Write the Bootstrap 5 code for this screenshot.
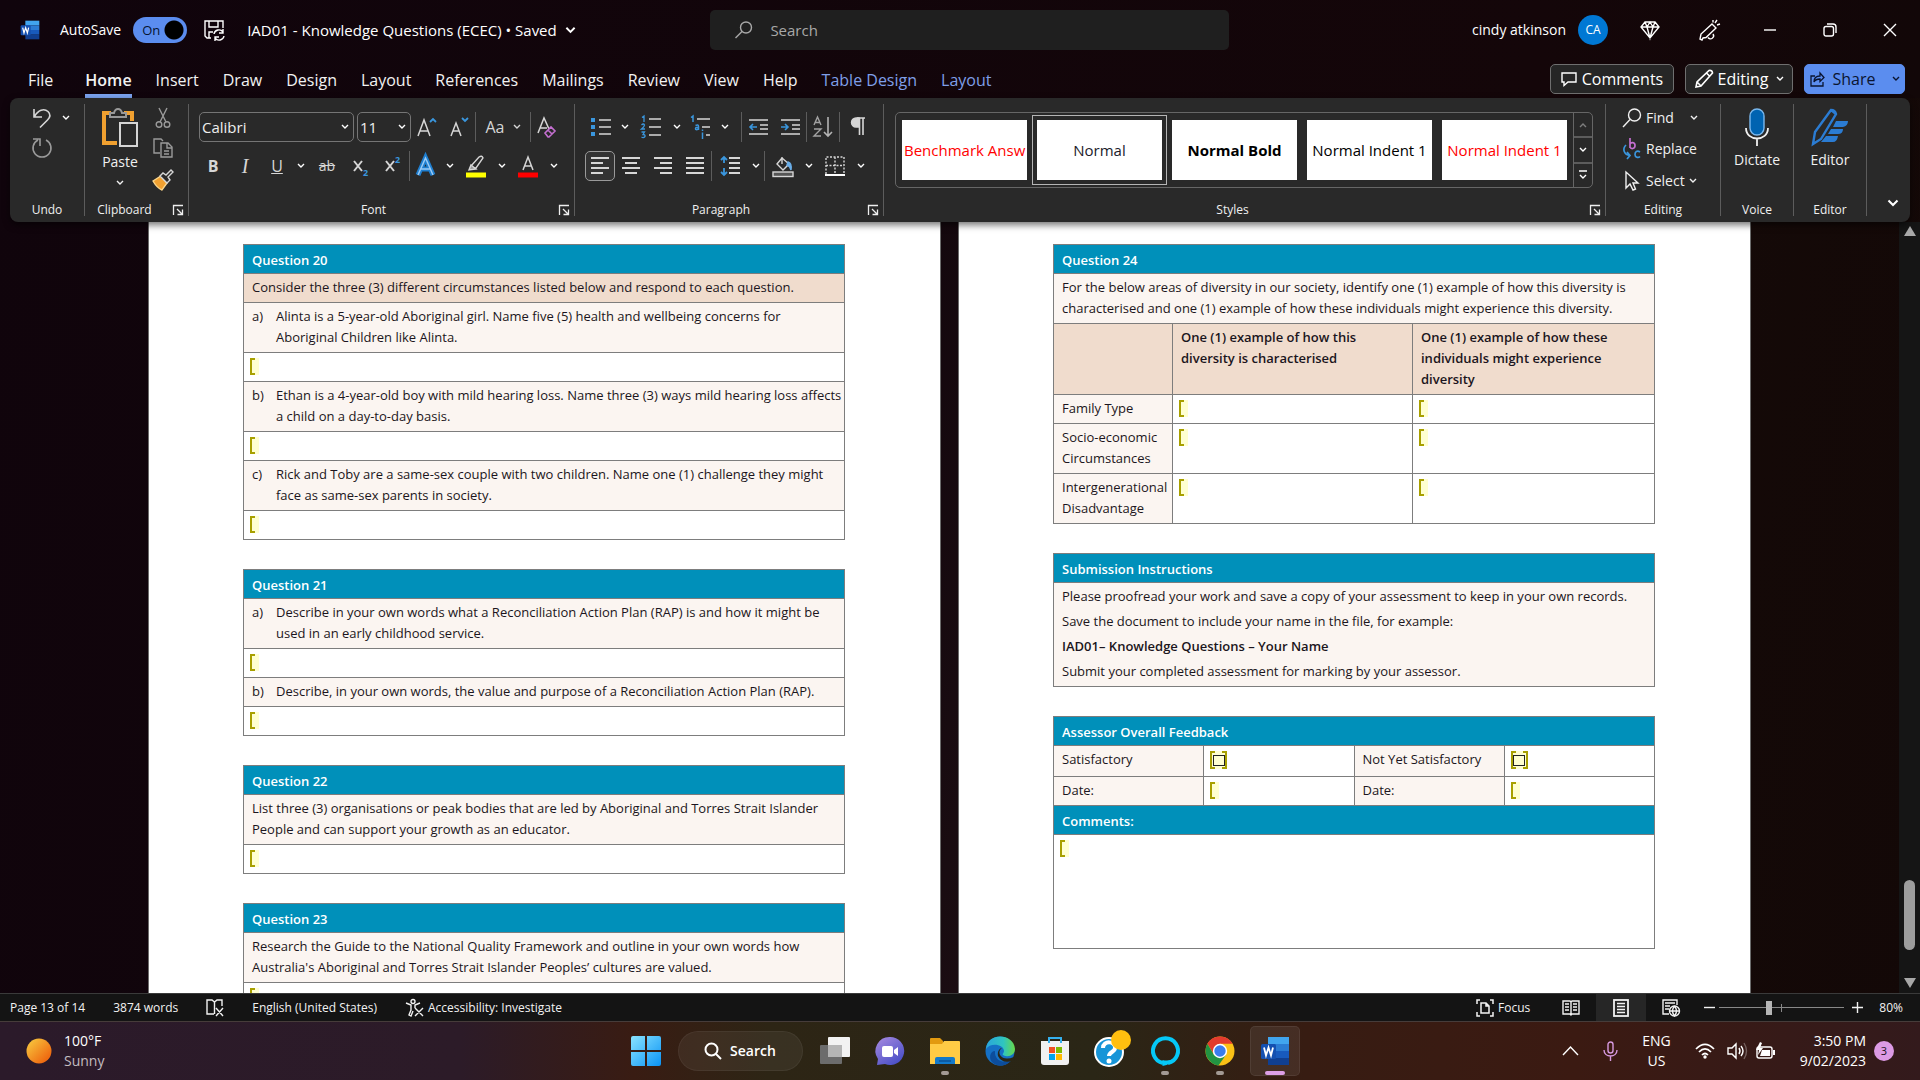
<!DOCTYPE html>
<html lang="en">
<head>
<meta charset="utf-8">
<meta name="viewport" content="width=device-width, initial-scale=1">
<title>IAD01 - Knowledge Questions (ECEC)</title>
<link href="https://cdn.jsdelivr.net/npm/bootstrap@5.3.0/dist/css/bootstrap.min.css" rel="stylesheet">
<style>
  :root { --ui: "Open Sans", "Noto Sans", sans-serif; --doc: "Open Sans", "Noto Sans", sans-serif; }
  body { font-family: var(--ui); font-size: 14px; line-height: 20px; color: #fff; background: linear-gradient(100deg, #10040c 0%, #12060c 45%, #231418 62%, #150a08 75%, #130807 100%); }
  button { font-family: inherit; }
  svg { display: block; flex: none; fill: none; stroke: currentColor; stroke-width: 1.4; overflow: visible; }
  svg text { stroke: none; fill: currentColor; font-family: var(--ui); }
  .flat { border: 0; background: none; color: inherit; padding: 0; display: flex; align-items: center; justify-content: center; }

  /* title bar */
  .titlebar { display: grid; grid-template-columns: 37% 27% 36%; height: 60px; align-items: center; background: linear-gradient(90deg, #10040c, #140609 80%, #120708); }
  .switch-wrap { position: relative; width: 54px; height: 26px; }
  .switch-wrap input { appearance: none; width: 54px; height: 26px; border-radius: 13px; background: radial-gradient(circle at 41px 13px, #000 9px, transparent 10px), #5b8def; margin: 0; display: block; }
  .switch-wrap span { position: absolute; left: 9px; top: 3px; font-size: 13px; color: #061430; pointer-events: none; }
  .doc-name { font-size: 15px; margin-left: 22px; }
  .search-box { height: 40px; background: #1f1f1f; border-radius: 5px; color: #a8a8a8; }
  .search-box input { background: none; border: 0; outline: 0; color: inherit; font-size: 15px; padding: 0; }
  .search-box input::placeholder { color: #a8a8a8; opacity: 1; }
  .avatar { width: 30px; height: 30px; border-radius: 50%; background: #0078d4; font-size: 12px; margin-right: 12px; }
  .win { width: 60px; height: 40px; }

  /* tabs */
  .tabs { height: 38px; background: linear-gradient(90deg, #10040c, #140609 80%, #120708); }
  .tabs .nav-link { font-size: 16px; line-height: 24px; color: #f2f2f2; padding: 0 0 4px; border-bottom: 4px solid transparent; border-radius: 0; }
  .tabs .nav-link.active { font-weight: 600; border-color: #7ba3f0; }
  .tabs .nav-link.ctx { color: #7f9fe8; }
  .tab-actions { gap: 11px; padding: 4px 15px 0 0; }
  .pill { height: 30px; width: 108px; border: 1px solid #6f6f6f; border-radius: 5px; background: #262626; color: #fff; font-size: 16px; display: flex; align-items: center; justify-content: center; padding: 0; }
  .pill.notes { width: 124px; }
  .pill.share { width: 101px; background: #5b8def; border-color: #5b8def; color: #0a1430; }

  /* ribbon */
  .ribbon { height: 124px; margin: 0 10px; background: #292929; border-radius: 8px; position: relative; z-index: 2; box-shadow: 0 3px 7px rgba(0,0,0,.55); padding: 6px 0; color: #d6d6d6; }
  .grp { border-right: 1px solid #5c5c5c; display: flex; flex-direction: column; position: relative; }
  .grp-body { height: 100px; }
  .grp-name { height: 12px; font-size: 12px; line-height: 12px; text-align: center; color: #f0f0f0; }
  .launch { position: absolute; right: 4px; bottom: 0; width: 12px; height: 12px; color: #eee; }
  .w-undo { width: 75px; } .w-clip { width: 104px; } .w-font { width: 386px; } .w-para { width: 309px; }
  .w-edit { width: 115px; } .w-voice { width: 73px; } .w-end { width: 43px; }
  .cmd-row { display: flex; align-items: center; padding-top: 7px; height: 39px; }
  .cmd-row.fonts { padding-left: 2px; }
  .tool { width: 32px; height: 32px; }
  .tool.wide { width: 36px; }
  .tool.low { height: 28px; }
  .tool.dim { color: #9a9a9a; }
  .tool.on { width: 30px; height: 30px; border: 1px solid #9a9a9a; border-radius: 5px; background: #333; }
  .case-btn { width: 54px; height: 32px; }
  .chev { width: 16px; height: 28px; color: #fff; }
  .vsep { width: 1px; height: 30px; background: #5c5c5c; }
  .combo { appearance: none; height: 30px; font-size: 15px; line-height: 20px; color: #eee; border: 1px solid #757575; border-radius: 5px; padding: 0 14px 0 2px;
    background: #292929 url("data:image/svg+xml,%3Csvg xmlns='http://www.w3.org/2000/svg' viewBox='0 0 8 6'%3E%3Cpath d='M1 1l3 3 3-3' fill='none' stroke='white' stroke-width='1.4'/%3E%3C/svg%3E") no-repeat right 4px center / 8px 6px; }
  .combo.face { width: 155px; margin-right: 3px; } .combo.size { width: 54px; }
  .serif-i { font-family: "Liberation Serif", serif; }
  .edit-list { gap: 2px; }
  .small-cmd { height: 30px; font-size: 14px; color: #f0f0f0; justify-content: flex-start; }
  .small-cmd.first { height: 28px; }
  .big-cmd { flex-direction: column; justify-content: flex-start; font-size: 14px; color: #f0f0f0; }
  .gal-pad { padding: 8px 12px 0 11px; }
  .gallery { height: 76px; border: 1px solid #666; border-radius: 5px; }
  .tiles { gap: 10px; padding: 0 6px; }
  .style-tile { flex: 1 1 0; min-width: 0; height: 60px; background: #fff; border: 0; padding: 0 2px; color: #000; font-size: 15px; white-space: nowrap; overflow: hidden; }
  .style-tile.picked { outline: 1px solid #b5b5b5; outline-offset: 4px; color: #1b1b2b; }
  .style-tile.red { color: #f00; }
  .gal-nav { width: 19px; border-left: 1px solid #666; }
  .gal-nav button { flex: 1; }
  .gal-nav button + button { border-top: 2px solid #5c5c5c; }

  /* document canvas */
  .canvas-area { flex: 1 1 0; min-height: 0; overflow: hidden; }
  .sheet { flex: 0 1 793px; background: #fff; border: 0 solid #6c6c6c; border-width: 0 1px; padding: 22px 95px 0 94px; color: #1b1520; }
  .sheets { gap: 17px; overflow: hidden; }
  .qt { width: 100%; border-collapse: collapse; table-layout: fixed; font-family: var(--doc); font-size: 13px; line-height: 21px; margin-bottom: 29px; }
  .qt td, .qt th { border: 1px solid #7d7d7d; padding: 3px 2px 4px 8px; vertical-align: top; background: #fbf5f1; font-weight: 400; text-align: left; }
  .qt th.head { background: #0090ba; color: #fff; font-weight: 600; padding: 5px 8px 2px; }
  .qt .peach { background: #f0dccd; }
  .qt th.peach, .qt b { font-weight: 600; }
  .qt td.ans { background: #fff; padding: 5px 6px 2px; }
  .qt ol { margin: 0; padding: 0; list-style: none; }
  .qt li { padding-left: 24px; text-indent: -24px; }
  .qt li::before { content: attr(data-n); display: inline-block; width: 24px; text-indent: 0; }
  .qt p { margin: 0 0 4px; } .qt p:last-child { margin: 0; }
  .c-label { width: 119px; } .c-mid { width: 240px; }
  .fill { display: flex; height: 21px; }
  .fill::before { content: ""; flex: none; width: 9px; height: 17px; background: linear-gradient(#a8a000, #a8a000) 0 0 / 2px 17px no-repeat, linear-gradient(#a8a000, #a8a000) 0 0 / 5px 2px no-repeat, linear-gradient(#a8a000, #a8a000) 0 100% / 5px 2px no-repeat, #ffffd0; }
  .fill input, .fill textarea { flex: 1; min-width: 0; border: 0; padding: 0; background: none; outline: 0; resize: none; }
  .fill.tall { height: 106px; }
  .tickbox { display: flex; align-items: center; justify-content: center; width: 17px; height: 18px; background: linear-gradient(#a8a000, #a8a000) 0 0 / 2px 100% no-repeat, linear-gradient(#a8a000, #a8a000) 100% 0 / 2px 100% no-repeat, linear-gradient(90deg, #a8a000 5px, #ffffd0 5px 12px, #a8a000 12px) 0 0 / 100% 2px no-repeat, linear-gradient(90deg, #a8a000 5px, #ffffd0 5px 12px, #a8a000 12px) 0 100% / 100% 2px no-repeat, #ffffd0; }
  .tickbox input { appearance: none; width: 12px; height: 11px; border: 1px solid #222; margin: 0; }
  .qt td.ans.roomy { padding-bottom: 7px; }
  .scroller { width: 21px; background: #151515; color: #a8a8a8; padding: 4px 0 5px; }
  .scroller .thumb { width: 11px; border-radius: 6px; background: #9d9d9d; flex: 0 0 70px; }
  .scroller .above { flex: 642; } .scroller .below { flex: 28; }

  /* status bar */
  .statusbar { height: 28px; background: #141414; border-top: 1px solid #3a3a3a; font-size: 12px; color: #f2f2f2; padding: 0 17px 0 10px; }
  .status-info { gap: 28px; }
  .view-btn { width: 50px; height: 27px; }
  .view-btn.on { background: #262626; }
  .zoomer { appearance: none; width: 125px; height: 14px; margin: 0; background: linear-gradient(#888, #888) 62px 50% / 1px 8px no-repeat, linear-gradient(#888, #888) 0 50% / 100% 1px no-repeat; }
  .zoomer::-webkit-slider-thumb { appearance: none; width: 6px; height: 14px; background: #b5b5b5; }

  /* taskbar */
  .taskbar { display: grid; grid-template-columns: 1fr auto 1fr; align-items: center; height: 59px; border-top: 1px solid #463c3a; font-size: 14px; padding: 0 26px;
    background: linear-gradient(90deg, #2b1a2a 0%, #2c1b28 24%, #391c13 33%, #2d2515 40%, #2a2616 57%, #371c12 68%, #3b1a12 82%, #331a1c 100%); }
  .muted-sky { color: #c3bcc0; }
  .apps { gap: 5px; }
  .app { width: 50px; height: 50px; border-radius: 5px; position: relative; }
  .app.live::after { content: ""; position: absolute; bottom: 1px; left: 21px; width: 8px; height: 4px; border-radius: 2px; background: #a39a94; }
  .app.front { background: rgba(255,255,255,.08); box-shadow: inset 0 0 0 1px rgba(255,255,255,.07); }
  .app.front::after { left: 15px; width: 20px; background: #dd9fe6; }
  .start-search { width: 125px; height: 40px; margin: 0 2px; border-radius: 20px; background: rgba(255,255,255,.06); box-shadow: inset 0 0 0 1px rgba(255,255,255,.05); font-weight: 600; }
  .tally { width: 20px; height: 20px; border-radius: 50%; background: #dc9ae4; color: #1b1020; font-size: 11px; }
  .mic { color: #d79ae0; }
</style>
<script src="https://cdn.jsdelivr.net/npm/bootstrap@5.3.0/dist/js/bootstrap.bundle.min.js"></script>
</head>
<body class="vh-100 d-flex flex-column overflow-hidden">

<svg width="0" height="0" class="position-absolute" aria-hidden="true">
  <symbol id="chev" viewBox="0 0 8 6"><path d="M1 1l3 3 3-3"/></symbol>
  <symbol id="launch" viewBox="0 0 12 12"><path d="M1.500 11V1.500H11M5 5l5 5M10.500 5.500v5h-5" stroke-width="1.300"/></symbol>
  <symbol id="word" viewBox="0 0 30 30"><g stroke="none"><rect x="8" y="1" width="21" height="7" fill="#41a5ee"/><rect x="8" y="8" width="21" height="7" fill="#2b7cd3"/><rect x="8" y="15" width="21" height="7" fill="#185abd"/><rect x="8" y="22" width="21" height="7" fill="#103f91"/><rect x="1" y="8" width="15" height="15" rx="1.500" fill="#1450b0"/></g><path d="M4 11.500l2 8 2.500-8 2.500 8 2-8" stroke="#fff" stroke-width="1.800"/></symbol>
</svg>

<header class="titlebar">
  <div class="d-flex align-items-center ps-3">
    <svg class="ms-1" width="20" height="22"><use href="#word"/></svg>
    <label for="autosave" class="ms-3 ps-1 me-2 pe-1">AutoSave</label>
    <div class="switch-wrap"><input type="checkbox" role="switch" id="autosave" checked><span>On</span></div>
    <button class="flat ms-3" aria-label="Save"><svg width="22" height="22" viewBox="0 0 22 22"><path d="M8 19H4l-2-2V2h18v7M6 2v6h9V2M6 19v-6h4"/><path d="M11 15a5 5 0 0 1 9-2M20 10v4h-4M21 17a5 5 0 0 1-9 2M12 22v-4h4"/></svg></button>
    <button class="flat doc-name">IAD01 - Knowledge Questions (ECEC) • Saved<svg class="ms-2" width="11" height="9"><use href="#chev"/></svg></button>
  </div>
  <div class="search-box d-flex align-items-center ps-4">
    <svg width="20" height="20" viewBox="0 0 20 20"><circle cx="12" cy="7.500" r="5.500"/><path d="M8 11.500L1.500 18"/></svg>
    <input class="ms-3 flex-grow-1" type="search" placeholder="Search" aria-label="Search">
  </div>
  <div class="d-flex align-items-center justify-content-end">
    <span class="me-2 pe-1">cindy atkinson</span>
    <span class="avatar d-flex align-items-center justify-content-center">CA</span>
    <button class="flat win" aria-label="Premium"><svg width="20" height="20" viewBox="0 0 20 20"><path d="M5 2h10l4 5-9 11L1 7zM1 7h18M7 7l3 11 3-11M5 2l2 5 3-5 3 5 2-5"/></svg></button>
    <button class="flat win" aria-label="Coming soon"><svg width="22" height="22" viewBox="0 0 22 22"><path d="M13 5l4 4-10 9.500-3 .500L3 21l-2-1 1-5zM9 18.500a3 3 0 0 0 5-3.500M14 1v2.500M18 1l-2 3M21 5l-3 1"/></svg></button>
    <button class="flat win" aria-label="Minimise"><svg width="12" height="12"><path d="M0 6h12"/></svg></button>
    <button class="flat win" aria-label="Restore"><svg width="14" height="14" viewBox="0 0 14 14"><rect x="1" y="3.500" width="9.500" height="9.500" rx="2"/><path d="M4 1h6a3 3 0 0 1 3 3v6"/></svg></button>
    <button class="flat win" aria-label="Close"><svg width="14" height="14"><path d="M1 1l12 12M13 1L1 13"/></svg></button>
  </div>
</header>

<div class="tabs d-flex justify-content-between">
  <nav class="nav flex-nowrap gap-4 ps-4 pt-2">
    <a class="nav-link ms-1 me-2" href="#">File</a><a class="nav-link active" href="#">Home</a><a class="nav-link" href="#">Insert</a><a class="nav-link" href="#">Draw</a><a class="nav-link" href="#">Design</a><a class="nav-link" href="#">Layout</a><a class="nav-link" href="#">References</a><a class="nav-link" href="#">Mailings</a><a class="nav-link" href="#">Review</a><a class="nav-link" href="#">View</a><a class="nav-link" href="#">Help</a><a class="nav-link ctx" href="#">Table Design</a><a class="nav-link ctx" href="#">Layout</a>
  </nav>
  <div class="tab-actions d-flex">
    <button class="pill notes"><svg class="me-1" width="17" height="16" viewBox="0 0 17 16"><path d="M1 2h14v9H7l-4 3.500V11H1z"/></svg>Comments</button>
    <button class="pill"><svg class="me-1" width="20" height="20" viewBox="0 0 20 20"><path d="M2 18l1-5L15 1.500q3-.500 3.500 2.500L7 17zM3 13l4 4M12.500 4L16 7.500" stroke-width="1.600"/></svg>Editing<svg class="ms-2" width="8" height="6"><use href="#chev"/></svg></button>
    <button class="pill share"><svg class="me-2" width="15" height="16" viewBox="0 0 15 16"><path d="M5 5H1v10h12v-4M4 11c0-4 2-6 6-6V2l4 4.500-4 4V8C7 8 5 9 4 11z" stroke-width="1.300"/></svg>Share<svg class="ms-3" width="8" height="6"><use href="#chev"/></svg></button>
  </div>
</div>

<section class="ribbon d-flex" aria-label="Ribbon">
  <div class="grp w-undo">
    <div class="grp-body ps-3">
      <div class="d-flex"><button class="flat tool low" aria-label="Undo"><svg width="22" height="22" viewBox="0 0 22 22"><path d="M3 2v8h8M3.500 9.500C7 3 13 1 17 4.500c3 3 2 6-.500 8.500L9 20.500" stroke-width="1.600"/></svg></button><button class="flat chev" aria-label="Undo list"><svg width="8" height="6"><use href="#chev"/></svg></button></div>
      <button class="flat tool dim" aria-label="Repeat"><svg width="22" height="22" viewBox="0 0 22 22"><path d="M2 2h7v7M15 3a9 9 0 1 1-8 0" stroke-width="1.600"/></svg></button>
    </div>
    <div class="grp-name">Undo</div>
  </div>

  <div class="grp w-clip">
    <div class="grp-body d-flex ps-3">
      <button class="flat big-cmd pt-1"><svg width="38" height="40" viewBox="0 0 38 40"><path d="M10 5H3v30h13M23 5h8v8" stroke="#f0a030" stroke-width="4"/><path d="M9 9V5h4q1-4 4-4t4 4h4v4z" stroke="#999" fill="#292929" stroke-width="2"/><rect x="19" y="15" width="17" height="23" fill="#292929" stroke="#d5d5d5" stroke-width="2"/></svg><span class="mt-1">Paste</span><svg class="mt-2" width="8" height="6"><use href="#chev"/></svg></button>
      <div class="d-flex flex-column ms-2">
        <button class="flat tool low dim" aria-label="Cut"><svg width="16" height="22" viewBox="0 0 16 22"><path d="M4 1l7 14M12 1L5 15"/><circle cx="4" cy="17.500" r="2.800"/><circle cx="12" cy="17.500" r="2.800"/></svg></button>
        <button class="flat tool dim" aria-label="Copy"><svg width="20" height="20" viewBox="0 0 20 20"><path d="M7 15H1V1h7l2 2M8 5h7l4 4v10H8zM14 5v5h5M11 13h5M11 16h5"/></svg></button>
        <button class="flat tool" aria-label="Format painter"><svg width="22" height="22" viewBox="0 0 22 22"><path d="M1 12l8-5 6 7-5 7q-5-2-9-9z" fill="#f0a030" stroke="#fbd68a"/><path d="M8 7l3-3 3 2 5-5 2 2-5 5 2 3-3 3z" fill="#292929"/></svg></button>
      </div>
    </div>
    <div class="grp-name pe-4">Clipboard</div>
    <button class="flat launch" aria-label="Clipboard options"><svg width="12" height="12"><use href="#launch"/></svg></button>
  </div>

  <div class="grp w-font">
    <div class="grp-body ps-2">
      <div class="cmd-row fonts">
        <select class="combo face" aria-label="Font"><option>Calibri</option></select>
        <select class="combo size" aria-label="Font size"><option>11</option></select>
        <button class="flat tool" aria-label="Grow font"><svg width="22" height="22" viewBox="0 0 22 22"><path d="M2 20L8 4l6 16M4 15h8" stroke-width="1.500"/><path d="M14 6l3-3 3 3" stroke="#3a96dd" stroke-width="1.800"/></svg></button>
        <button class="flat tool" aria-label="Shrink font"><svg width="22" height="22" viewBox="0 0 22 22"><path d="M3 20L8 7l5 13M5 15h6" stroke-width="1.500"/><path d="M14 2l3 3 3-3" stroke="#3a96dd" stroke-width="1.800"/></svg></button>
        <span class="vsep"></span>
        <button class="flat case-btn" aria-label="Change case"><span class="fs-6">Aa</span><svg class="ms-2" width="8" height="6"><use href="#chev"/></svg></button>
        <span class="vsep"></span>
        <button class="flat tool" aria-label="Clear formatting"><svg width="22" height="22" viewBox="0 0 22 22"><path d="M2 17L8 2l5 11M4 12h7" stroke-width="1.500"/><path d="M9 17l6-6 4 4-6 6h-1zM12 14l4 4" stroke="#c46fd0" stroke-width="1.600"/></svg></button>
      </div>
      <div class="cmd-row">
        <button class="flat tool fs-6 fw-bold">B</button>
        <button class="flat tool fs-5 fst-italic serif-i">I</button>
        <button class="flat tool fs-6 text-decoration-underline">U</button>
        <button class="flat chev" aria-label="Underline styles"><svg width="8" height="6"><use href="#chev"/></svg></button>
        <button class="flat tool wide text-decoration-line-through">ab</button>
        <button class="flat tool" aria-label="Subscript"><svg width="18" height="24" viewBox="0 0 18 24"><path d="M2 7l8 10M10 7L2 17" stroke-width="2"/><text x="11" y="22" font-size="9" style="fill:#3a96dd" font-weight="700">2</text></svg></button>
        <button class="flat tool" aria-label="Superscript"><svg width="18" height="24" viewBox="0 0 18 24"><path d="M2 7l8 10M10 7L2 17" stroke-width="2"/><text x="11" y="9" font-size="9" style="fill:#3a96dd" font-weight="700">2</text></svg></button>
        <span class="vsep"></span>
        <button class="flat tool" aria-label="Text effects"><svg width="22" height="22" viewBox="0 0 22 22"><path d="M3 20L10.500 3 18 20M6 14h9" stroke="#1f7fd0" stroke-width="5"/><path d="M3 20L10.500 3 18 20M6 14h9" stroke="#9ccbf5" stroke-width="1.500"/></svg></button>
        <button class="flat chev" aria-label="Text effect list"><svg width="8" height="6"><use href="#chev"/></svg></button>
        <button class="flat tool wide" aria-label="Highlight"><svg width="22" height="22" viewBox="0 0 22 22"><path d="M6 11L14 2q3-2 4 1l-7 10H6z"/><path d="M6 10l5 4-7 1z" fill="#999"/><path d="M1 20h20" stroke="#ff0" stroke-width="5"/></svg></button>
        <button class="flat chev" aria-label="Highlight colours"><svg width="8" height="6"><use href="#chev"/></svg></button>
        <button class="flat tool wide" aria-label="Font colour"><svg width="22" height="22" viewBox="0 0 22 22"><path d="M6 15L11 2l5 13M7.500 11h7" stroke-width="1.500"/><path d="M1 20h20" stroke="#f00" stroke-width="5"/></svg></button>
        <button class="flat chev" aria-label="Font colours"><svg width="8" height="6"><use href="#chev"/></svg></button>
      </div>
    </div>
    <div class="grp-name pe-3">Font</div>
    <button class="flat launch" aria-label="Font options"><svg width="12" height="12"><use href="#launch"/></svg></button>
  </div>

  <div class="grp w-para">
    <div class="grp-body ps-2">
      <div class="cmd-row fonts">
        <button class="flat tool" aria-label="Bullets"><svg width="20" height="20" viewBox="0 0 20 20"><path d="M8 3h12M8 10h12M8 17h12" stroke-width="1.600"/><path d="M0 3h4M0 10h4M0 17h4" stroke="#3a96dd" stroke-width="4"/></svg></button>
        <button class="flat chev" aria-label="Bullet list"><svg width="8" height="6"><use href="#chev"/></svg></button>
        <button class="flat tool wide" aria-label="Numbering"><svg width="20" height="24" viewBox="0 0 20 24"><path d="M8 4h12M8 12h12M8 20h12" stroke-width="1.600"/><path d="M1 2.500L3 1v6M0.500 10q2-2 3 0 0 1.500-3 4h3.500M.500 17h3L2 19.500q2.500 0 2 2-1.500 2-3.500.500" stroke="#3a96dd" stroke-width="1.300"/></svg></button>
        <button class="flat chev" aria-label="Number list"><svg width="8" height="6"><use href="#chev"/></svg></button>
        <button class="flat tool" aria-label="Multilevel list"><svg width="20" height="24" viewBox="0 0 20 24"><path d="M6 4h13M11 12h8M15 20h4" stroke-width="1.600"/><path d="M0 2.500L2 1v6M4.500 10.500q3-1.500 3 1v3.500M7.500 12.500q-3-.500-3 1.200t3 .300M11.500 17.500V24M11.500 14.500v1.500" stroke="#3a96dd" stroke-width="1.500"/></svg></button>
        <button class="flat chev" aria-label="Multilevel styles"><svg width="8" height="6"><use href="#chev"/></svg></button>
        <span class="vsep ms-2"></span>
        <button class="flat tool" aria-label="Decrease indent"><svg width="19" height="18" viewBox="0 0 19 18"><path d="M0 2h19M11 7h8M11 11h8M0 16h19" stroke-width="1.600"/><path d="M8 9H1M4 6L1 9l3 3" stroke="#3a96dd" stroke-width="1.600"/></svg></button>
        <button class="flat tool" aria-label="Increase indent"><svg width="19" height="18" viewBox="0 0 19 18"><path d="M0 2h19M11 7h8M11 11h8M0 16h19" stroke-width="1.600"/><path d="M0 9h7M4 6l3 3-3 3" stroke="#3a96dd" stroke-width="1.600"/></svg></button>
        <span class="vsep"></span>
        <button class="flat tool" aria-label="Sort"><svg width="20" height="22" viewBox="0 0 20 22"><path d="M1 9l3.500-8L8 9M2 6.500h5M1 13h7l-7 7h7" opacity=".7"/><path d="M15 1v19M11 16l4 4 4-4" stroke-width="1.600" opacity=".8"/></svg></button>
        <span class="vsep"></span>
        <button class="flat tool wide" aria-label="Show marks"><svg width="14" height="20" viewBox="0 0 14 20"><path d="M6 1h8M8.500 1v17M12 1v17" stroke-width="1.600"/><path d="M8 1H5a4.500 4.500 0 0 0 0 9h3z" fill="currentColor"/></svg></button>
      </div>
      <div class="cmd-row fonts">
        <button class="flat tool on" aria-label="Align left"><svg width="20" height="20" viewBox="0 0 20 20"><path d="M1 2h18M1 7h12M1 12h18M1 17h12" stroke-width="1.800"/></svg></button>
        <button class="flat tool" aria-label="Centre"><svg width="20" height="20" viewBox="0 0 20 20"><path d="M1 2h18M4 7h12M1 12h18M4 17h12" stroke-width="1.800"/></svg></button>
        <button class="flat tool" aria-label="Align right"><svg width="20" height="20" viewBox="0 0 20 20"><path d="M1 2h18M7 7h12M1 12h18M7 17h12" stroke-width="1.800"/></svg></button>
        <button class="flat tool" aria-label="Justify"><svg width="20" height="20" viewBox="0 0 20 20"><path d="M1 2h18M1 7h18M1 12h18M1 17h18" stroke-width="1.800"/></svg></button>
        <span class="vsep"></span>
        <button class="flat tool wide" aria-label="Line spacing"><svg width="20" height="20" viewBox="0 0 20 20"><path d="M9 2h11M9 7h11M9 12h11M9 17h11" stroke-width="1.800"/><path d="M4 1v6M1 4l3-3 3 3M4 19v-7M1 16l3 3 3-3" stroke="#3a96dd" stroke-width="1.800"/></svg></button>
        <button class="flat chev" aria-label="Line spacing list"><svg width="8" height="6"><use href="#chev"/></svg></button>
        <span class="vsep"></span>
        <button class="flat tool wide" aria-label="Shading"><svg width="22" height="22" viewBox="0 0 22 22"><path d="M10 2v7M10 3l7 6-6 6-6-6z"/><path d="M16 7q4 1 3 8-1-4-4-5z" fill="#6aaee8" stroke="#6aaee8"/><rect x="1" y="17" width="20" height="4.500" fill="#555"/></svg></button>
        <button class="flat chev" aria-label="Shading colours"><svg width="8" height="6"><use href="#chev"/></svg></button>
        <button class="flat tool wide" aria-label="Borders"><svg width="20" height="20" viewBox="0 0 20 20"><path d="M1 18V1h18v17M10 1v17M1 9.500h18" stroke-dasharray="2 1.500"/><path d="M0 19h20" stroke="#fff" stroke-width="2"/></svg></button>
        <button class="flat chev" aria-label="Border list"><svg width="8" height="6"><use href="#chev"/></svg></button>
      </div>
    </div>
    <div class="grp-name pe-3">Paragraph</div>
    <button class="flat launch" aria-label="Paragraph options"><svg width="12" height="12"><use href="#launch"/></svg></button>
  </div>

  <div class="grp flex-grow-1">
    <div class="grp-body gal-pad">
      <div class="gallery d-flex">
        <div class="tiles d-flex flex-grow-1 align-items-center">
          <button class="style-tile red text-start">Benchmark Answ</button><button class="style-tile picked">Normal</button><button class="style-tile fw-bold">Normal Bold</button><button class="style-tile">Normal Indent 1</button><button class="style-tile red">Normal Indent 1</button>
        </div>
        <div class="gal-nav d-flex flex-column text-white">
          <button class="flat" aria-label="Previous styles"><svg width="8" height="6" viewBox="0 0 8 6" opacity=".4"><path d="M1 5l3-3 3 3"/></svg></button>
          <button class="flat" aria-label="Next styles"><svg width="8" height="6"><use href="#chev"/></svg></button>
          <button class="flat" aria-label="More styles"><svg width="10" height="10" viewBox="0 0 10 10"><path d="M1 1h8M2 5l3 3 3-3"/></svg></button>
        </div>
      </div>
    </div>
    <div class="grp-name pe-4">Styles</div>
    <button class="flat launch" aria-label="Styles options"><svg width="12" height="12"><use href="#launch"/></svg></button>
  </div>

  <div class="grp w-edit">
    <div class="grp-body edit-list d-flex flex-column ps-3">
      <button class="flat small-cmd first"><svg class="me-1" width="20" height="20" viewBox="0 0 20 20"><circle cx="12.500" cy="7" r="6"/><path d="M8 11.500L1 19"/></svg>Find<svg class="ms-3" width="8" height="6"><use href="#chev"/></svg></button>
      <button class="flat small-cmd"><svg class="me-1" width="20" height="22" viewBox="0 0 20 22"><path d="M8 0v10M8 6c1-2 5-2 5 1.500S9 11.500 8 9" stroke="#c46fd0" stroke-width="1.700"/><path d="M18 14c-3-2-5 0-5 2.500s3 4 5 2M4 7c-4 4-2 10 4 10.500M5 14l3 3.500-3 3.500" stroke="#3a96dd" stroke-width="1.700"/></svg>Replace</button>
      <button class="flat small-cmd"><svg class="me-1" width="20" height="22" viewBox="0 0 20 22"><path d="M4 2v16l4-4 3 6 2.500-1-2.500-6h5z"/></svg>Select<svg class="ms-1" width="8" height="6"><use href="#chev"/></svg></button>
    </div>
    <div class="grp-name">Editing</div>
  </div>
  <div class="grp w-voice">
    <div class="grp-body d-flex justify-content-center"><button class="flat big-cmd pt-1"><svg width="26" height="38" viewBox="0 0 26 38"><rect x="6" y="1" width="14" height="26" rx="7" fill="#0063b1" stroke="#7ab8ee"/><path d="M2 20c0 14 22 14 22 0M13 31v7" stroke-width="1.800"/></svg><span class="mt-1">Dictate</span></button></div>
    <div class="grp-name">Voice</div>
  </div>
  <div class="grp w-voice">
    <div class="grp-body d-flex justify-content-center"><button class="flat big-cmd pt-1"><svg width="38" height="38" viewBox="0 0 38 38"><path d="M2 36l2-12L20 2q4 0 5 4L10 31zM20 2l5 4" stroke="#2b7cd3" stroke-width="2.400"/><path d="M25 13h12q0 5-5 6h-10zM20 21h12q0 5-5 5h-10zM15 28h12q-1 6-5 6H10z" fill="#2b7cd3" stroke="none"/></svg><span class="mt-1">Editor</span></button></div>
    <div class="grp-name">Editor</div>
  </div>
  <div class="w-end d-flex align-items-end justify-content-center ps-2 pb-2"><button class="flat text-white" aria-label="Ribbon display"><svg width="12" height="9"><use href="#chev"/></svg></button></div>
</section>

<main class="canvas-area d-flex">
  <div class="sheets d-flex flex-grow-1 justify-content-center">
    <article class="sheet">
      <table class="qt">
        <tr><th class="head">Question 20</th></tr>
        <tr><td class="peach">Consider the three (3) different circumstances listed below and respond to each question.</td></tr>
        <tr><td><ol><li data-n="a)">Alinta is a 5-year-old Aboriginal girl. Name five (5) health and wellbeing concerns for<br>Aboriginal Children like Alinta.</li></ol></td></tr>
        <tr><td class="ans"><div class="fill"><input type="text" aria-label="Answer 20 a"></div></td></tr>
        <tr><td><ol><li data-n="b)">Ethan is a 4-year-old boy with mild hearing loss. Name three (3) ways mild hearing loss affects<br>a child on a day-to-day basis.</li></ol></td></tr>
        <tr><td class="ans"><div class="fill"><input type="text" aria-label="Answer 20 b"></div></td></tr>
        <tr><td><ol><li data-n="c)">Rick and Toby are a same-sex couple with two children. Name one (1) challenge they might<br>face as same-sex parents in society.</li></ol></td></tr>
        <tr><td class="ans"><div class="fill"><input type="text" aria-label="Answer 20 c"></div></td></tr>
      </table>
      <table class="qt">
        <tr><th class="head">Question 21</th></tr>
        <tr><td><ol><li data-n="a)">Describe in your own words what a Reconciliation Action Plan (RAP) is and how it might be<br>used in an early childhood service.</li></ol></td></tr>
        <tr><td class="ans"><div class="fill"><input type="text" aria-label="Answer 21 a"></div></td></tr>
        <tr><td><ol><li data-n="b)">Describe, in your own words, the value and purpose of a Reconciliation Action Plan (RAP).</li></ol></td></tr>
        <tr><td class="ans"><div class="fill"><input type="text" aria-label="Answer 21 b"></div></td></tr>
      </table>
      <table class="qt">
        <tr><th class="head">Question 22</th></tr>
        <tr><td>List three (3) organisations or peak bodies that are led by Aboriginal and Torres Strait Islander<br>People and can support your growth as an educator.</td></tr>
        <tr><td class="ans"><div class="fill"><input type="text" aria-label="Answer 22"></div></td></tr>
      </table>
      <table class="qt">
        <tr><th class="head">Question 23</th></tr>
        <tr><td>Research the Guide to the National Quality Framework and outline in your own words how<br>Australia's Aboriginal and Torres Strait Islander Peoples’ cultures are valued.</td></tr>
        <tr><td class="ans"><div class="fill"><input type="text" aria-label="Answer 23"></div></td></tr>
      </table>
    </article>

    <article class="sheet">
      <table class="qt">
        <colgroup><col class="c-label"><col class="c-mid"><col></colgroup>
        <tr><th class="head" colspan="3">Question 24</th></tr>
        <tr><td colspan="3">For the below areas of diversity in our society, identify one (1) example of how this diversity is<br>characterised and one (1) example of how these individuals might experience this diversity.</td></tr>
        <tr><th class="peach"></th><th class="peach">One (1) example of how this<br>diversity is characterised</th><th class="peach">One (1) example of how these<br>individuals might experience<br>diversity</th></tr>
        <tr><td>Family Type</td><td class="ans"><div class="fill"><input type="text" aria-label="Family type characterised"></div></td><td class="ans"><div class="fill"><input type="text" aria-label="Family type experienced"></div></td></tr>
        <tr><td>Socio-economic<br>Circumstances</td><td class="ans"><div class="fill"><input type="text" aria-label="Circumstances characterised"></div></td><td class="ans"><div class="fill"><input type="text" aria-label="Circumstances experienced"></div></td></tr>
        <tr><td>Intergenerational<br>Disadvantage</td><td class="ans"><div class="fill"><input type="text" aria-label="Disadvantage characterised"></div></td><td class="ans"><div class="fill"><input type="text" aria-label="Disadvantage experienced"></div></td></tr>
      </table>
      <table class="qt">
        <tr><th class="head">Submission Instructions</th></tr>
        <tr><td><p>Please proofread your work and save a copy of your assessment to keep in your own records.</p><p>Save the document to include your name in the file, for example:</p><p><b>IAD01– Knowledge Questions – Your Name</b></p><p>Submit your completed assessment for marking by your assessor.</p></td></tr>
      </table>
      <table class="qt">
        <tr><th class="head" colspan="4">Assessor Overall Feedback</th></tr>
        <tr><td><label for="sat">Satisfactory</label></td><td class="ans roomy"><div class="tickbox"><input type="checkbox" id="sat"></div></td><td><label for="nys">Not Yet Satisfactory</label></td><td class="ans roomy"><div class="tickbox"><input type="checkbox" id="nys"></div></td></tr>
        <tr><td><label for="d1">Date:</label></td><td class="ans"><div class="fill"><input type="text" id="d1"></div></td><td><label for="d2">Date:</label></td><td class="ans"><div class="fill"><input type="text" id="d2"></div></td></tr>
        <tr><th class="head" colspan="4"><label for="cm">Comments:</label></th></tr>
        <tr><td class="ans" colspan="4"><div class="fill tall"><textarea id="cm"></textarea></div></td></tr>
      </table>
    </article>
  </div>
  <div class="scroller d-flex flex-column align-items-center">
    <svg width="12" height="10"><path d="M6 0l6 10H0z" fill="currentColor" stroke="none"/></svg>
    <span class="above"></span><span class="thumb"></span><span class="below"></span>
    <svg width="12" height="10"><path d="M6 10l6-10H0z" fill="currentColor" stroke="none"/></svg>
  </div>
</main>

<footer class="statusbar d-flex align-items-center justify-content-between">
  <div class="status-info d-flex align-items-center">
    <span>Page 13 of 14</span><span>3874 words</span>
    <button class="flat" aria-label="Proofing"><svg width="18" height="18" viewBox="0 0 18 18"><path d="M8 15H1V1h5l2.500 2L11 1h5v6M8.500 3v12M10 9l7 8M17 9l-7 8"/></svg></button>
    <span>English (United States)</span>
    <button class="flat"><svg class="me-1" width="19" height="18" viewBox="0 0 19 18"><circle cx="8" cy="2.500" r="2"/><path d="M1 4l5 2v5l-2 5 2 1 2-5M15 4l-5 2v3M10 9l8 8M18 9l-8 8"/></svg>Accessibility: Investigate</button>
  </div>
  <div class="d-flex align-items-center">
    <button class="flat me-3"><svg class="me-1" width="18" height="18" viewBox="0 0 18 18"><path d="M4 1H1v4M14 1h3v4M4 17H1v-4M14 17h3v-4M5 4h5l3 3v7H5zM10 4v3h3" stroke-width="1.500"/></svg>Focus</button>
    <button class="flat view-btn" aria-label="Read mode"><svg width="18" height="16" viewBox="0 0 18 16"><path d="M1 1h7l1 1 1-1h7v13h-7l-1 1-1-1H1zM9 2v13M3 4h4M3 7h4M3 10h4M11 4h4M11 7h4M11 10h4"/></svg></button>
    <button class="flat view-btn on" aria-label="Print layout"><svg width="16" height="18" viewBox="0 0 16 18"><rect x="1" y="1" width="14" height="16" stroke-width="1.800"/><path d="M4 4.500h8M4 7.500h8M4 10.500h8M4 13.500h8"/></svg></button>
    <button class="flat view-btn" aria-label="Web layout"><svg width="18" height="18" viewBox="0 0 18 18"><path d="M7 15H1V1h14v5M3 4h10M3 7h5M3 10h4"/><circle cx="12.500" cy="12" r="5"/><path d="M7.500 12h10M12.500 7q-4 5 0 10q4-5 0-10"/></svg></button>
    <button class="flat me-1 ms-2" aria-label="Zoom out"><svg width="11" height="11"><path d="M0 5.500h11"/></svg></button>
    <input class="zoomer" type="range" aria-label="Zoom" min="0" max="100" value="39">
    <button class="flat ms-2 me-3" aria-label="Zoom in"><svg width="11" height="11"><path d="M0 5.500h11M5.500 0v11"/></svg></button>
    <span>80%</span>
  </div>
</footer>

<div class="taskbar">
  <div class="d-flex align-items-center">
    <svg class="me-2" width="26" height="26" viewBox="0 0 26 26"><defs><linearGradient id="sun" x2="1" y2="1"><stop offset=".1" stop-color="#f7c33c"/><stop offset=".8" stop-color="#ef6c12"/></linearGradient></defs><circle cx="13" cy="13" r="12.500" fill="url(#sun)" stroke="none"/></svg>
    <div class="ms-1"><div>100°F</div><div class="muted-sky">Sunny</div></div>
  </div>
  <div class="apps d-flex align-items-center">
    <button class="flat app" aria-label="Start"><svg width="30" height="30" viewBox="0 0 30 30"><defs><linearGradient id="win" x2="1" y2="1"><stop stop-color="#8ae4ff"/><stop offset="1" stop-color="#0a93f5"/></linearGradient></defs><path d="M0 2q0-2 2-2h12v14H0zM16 0h12q2 0 2 2v12H16zM0 16h14v14H2q-2 0-2-2zM16 16h14v12q0 2-2 2H16z" fill="url(#win)" stroke="none"/></svg></button>
    <button class="flat start-search"><svg class="me-2" width="18" height="18" viewBox="0 0 18 18"><circle cx="7.500" cy="7.500" r="6" stroke-width="2"/><path d="M12 12l5 5" stroke-width="2"/></svg>Search</button>
    <button class="flat app" aria-label="Task view"><svg width="30" height="28" viewBox="0 0 30 28"><g stroke="none"><rect x="0" y="8" width="22" height="19" rx="1" fill="#6c6c6c"/><rect x="8" y="0" width="22" height="20" rx="1" fill="#f2f2f2"/><rect x="8" y="8" width="14" height="12" fill="#b5b5b5"/></g></svg></button>
    <button class="flat app" aria-label="Chat"><svg width="30" height="30" viewBox="0 0 30 30"><defs><linearGradient id="chat" x2=".7" y2="1"><stop stop-color="#a98be0"/><stop offset="1" stop-color="#4a50c8"/></linearGradient></defs><path d="M15 1a14 14 0 1 1-5 27l-8 1 1-6A14 14 0 0 1 15 1z" fill="url(#chat)" stroke="none"/><rect x="7" y="10" width="11" height="11" rx="2" fill="#fff" stroke="none"/><path d="M19 14l4-3v9l-4-3z" fill="#fff" stroke="none"/></svg></button>
    <button class="flat app live" aria-label="File Explorer"><svg width="30" height="28" viewBox="0 0 30 28"><g stroke="none"><path d="M0 2q0-1 1-1h9l3 3v6H0z" fill="#e29a10"/><path d="M0 7h12l2-3h15q1 0 1 1v22H0z" fill="#ffcb45"/><path d="M5 27v-5q0-2 2-2h16q2 0 2 2v5z" fill="#1279ca"/></g><path d="M9 24h12" stroke="#0b4f92"/></svg></button>
    <button class="flat app" aria-label="Edge"><svg width="30" height="30" viewBox="0 0 30 30"><defs><linearGradient id="e1" x2="1"><stop stop-color="#2aa5dc"/><stop offset=".6" stop-color="#2fc5c0"/><stop offset="1" stop-color="#67d94a"/></linearGradient></defs><g stroke="none"><circle cx="15" cy="15" r="14.500" fill="#1570c5"/><path d="M1 13C2-4 29-3 30 13c0 6-7 9-12 6-1-1 1-2 1-4 0-7-14-9-18-2z" fill="url(#e1)"/><path d="M10 15c-1 9 8 14 17 8-4 7-13 9-19 4-5-4-3-12 2-12z" fill="#0c4d9c"/><path d="M17 12q-4 3-2 7 4 6 14 2l1 4-3 0q-10 3-14-5c-1-5 2-8 4-8z" fill="#2a2616"/></g></svg></button>
    <button class="flat app" aria-label="Store"><svg width="30" height="30" viewBox="0 0 30 30"><path d="M9 7V2h12v5" stroke="#35b0ee" stroke-width="2"/><path d="M1 5h28v21q0 3-3 3H4q-3 0-3-3z" fill="#f1f1f1" stroke="none"/><g stroke="none"><path d="M9 11h6v6H9z" fill="#f25022"/><path d="M16 11h6v6h-6z" fill="#7fba00"/><path d="M9 18h6v6H9z" fill="#00a4ef"/><path d="M16 18h6v6h-6z" fill="#ffb900"/></g><path d="M9 5v2M21 5v2" stroke="#35b0ee" stroke-width="2"/></svg></button>
    <button class="flat app" aria-label="Help"><svg width="40" height="42" viewBox="0 0 40 42"><circle cx="19" cy="22" r="14" fill="#1795d8" stroke="#fff" stroke-width="2"/><path d="M13 18c0-8 13-7 12 0 0 4-6 4-6 8" stroke="#fff" stroke-width="4"/><circle cx="19" cy="31" r="2.500" fill="#fff" stroke="none"/><circle cx="31" cy="10" r="10" fill="#ffbf0f" stroke="none"/></svg></button>
    <button class="flat app live" aria-label="Alexa"><svg width="30" height="30" viewBox="0 0 30 30"><path d="M13 27a12.500 12.500 0 1 1 5 0" stroke="#05c8f7" stroke-width="4"/><path d="M12.500 24v6q9-1 12-9-4 5-12 3z" fill="#05c8f7" stroke="none"/></svg></button>
    <button class="flat app live" aria-label="Chrome"><svg width="30" height="30" viewBox="0 0 30 30"><g stroke="none"><circle cx="15" cy="15" r="14.500" fill="#fbc116"/><path d="M2.400 7.800A14.500 14.500 0 0 1 27.600 7.800H15L9 18.500z" fill="#e33b2e"/><path d="M2.400 7.800l6.400 10.800 6.200 3.400-1.500 7.400A14.500 14.500 0 0 1 2.400 7.800z" fill="#229342"/><path d="M21.200 18.600L13.500 29.400 9 18.500z" fill="#229342"/><circle cx="15" cy="15" r="7.200" fill="#fff"/><circle cx="15" cy="15" r="5.700" fill="#3b7ded"/></g></svg></button>
    <button class="flat app live front" aria-label="Word"><svg width="30" height="30"><use href="#word"/></svg></button>
  </div>
  <div class="d-flex align-items-center justify-content-end">
    <button class="flat me-3 pe-2" aria-label="Hidden icons"><svg width="17" height="10" viewBox="0 0 17 10"><path d="M1 9l7.500-8L16 9"/></svg></button>
    <svg class="mic me-4" width="15" height="20" viewBox="0 0 15 20"><rect x="5" y="1" width="5" height="11" rx="2.500"/><path d="M1 9c0 8 13 8 13 0M7.500 15v5"/></svg>
    <div class="text-center me-4">ENG<br>US</div>
    <svg class="me-2" width="20" height="16" viewBox="0 0 20 16"><path d="M1 6q9-9 18 0M4 9q6-6 12 0M7 12q3-3 6 0" stroke-width="1.700"/><circle cx="10" cy="14" r="1.700" fill="#fff" stroke="none"/></svg>
    <svg class="me-2 ms-1" width="20" height="18" viewBox="0 0 20 18"><path d="M1 6h4l4-4v14l-4-4H1zM12 6q2 3 0 6M14 4q4 5 0 10"/><path d="M17 1q5 8 0 16" opacity=".3"/></svg>
    <svg class="me-4" width="21" height="18" viewBox="0 0 21 18"><rect x="2" y="5" width="15" height="11" rx="2"/><path d="M19 8v5" stroke-width="2"/><path d="M7 8h8v6H5z" fill="#fff" stroke="none"/><path d="M5 0L1 8h3l-1 5 5-7H5l2-5z" fill="#fff" stroke="none"/></svg>
    <div class="text-end me-2">3:50 PM<br>9/02/2023</div>
    <span class="tally d-flex align-items-center justify-content-center">3</span>
  </div>
</div>
</body>
</html>
